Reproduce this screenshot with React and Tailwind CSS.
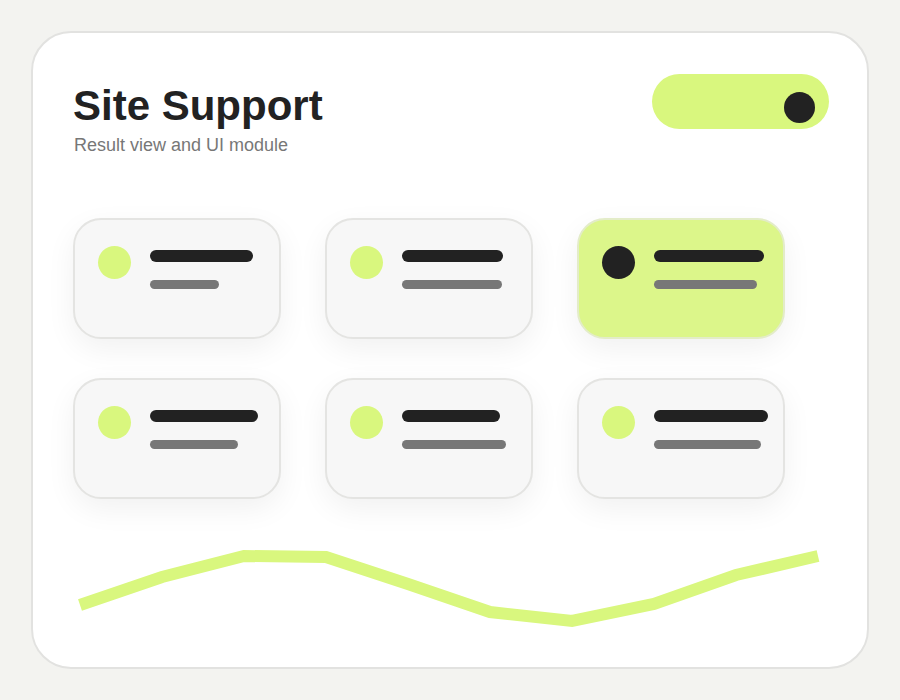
import React from 'react';

const tiles = [
  { a: 103, b: 69 },
  { a: 101, b: 100 },
  { a: 110, b: 103, active: true },
  { a: 108, b: 88 },
  { a: 98, b: 104 },
  { a: 114, b: 107 },
];

const points = [606, 578, 557, 558, 585, 613, 622, 605, 576, 557]
  .map((y, i) => `${7 + i * 82},${y - 539}`)
  .join(' ');

function Tile({ a, b, active }) {
  return (
    <div
      className={`h-[121px] rounded-[28px] border-2 pl-[23px] pt-[26px] flex items-start shadow-[0_10px_30px_rgba(0,0,0,0.06)] ${
        active ? 'bg-[#dcf68a] border-[#e3ecc8]' : 'bg-[#f7f7f7] border-[#e4e4e2]'
      }`}
    >
      <div className={`w-[33px] h-[33px] rounded-full shrink-0 ${active ? 'bg-[#222222]' : 'bg-[#d9f77e]'}`} />
      <div className="ml-[19px] pt-[4px] flex flex-col">
        <div className="h-[12px] rounded-full bg-[#222222]" style={{ width: a }} />
        <div className="mt-[18px] h-[9px] rounded-full bg-[#777777]" style={{ width: b }} />
      </div>
    </div>
  );
}

export default function App() {
  return (
    <div className="w-[900px] h-[700px] bg-[#f3f3f0] p-[31px] font-['Liberation_Sans',Arial,sans-serif]">
      <div className="w-[838px] h-[638px] bg-white border-2 border-[#e2e2e0] rounded-[40px] pl-[40px] pr-[38px] pt-[41px]">
        <div className="flex justify-between items-start">
          <div className="pt-[11px]">
            <h1 className="text-[42px] leading-none font-bold text-[#222222]">Site Support</h1>
            <p className="mt-[9px] text-[18px] leading-none text-[#777777] pl-[1px]">Result view and UI module</p>
          </div>
          <div className="w-[177px] h-[55px] rounded-full bg-[#d9f77e] flex items-start justify-end pr-[14px] pt-[18px]">
            <div className="w-[31px] h-[31px] rounded-full bg-[#222222]" />
          </div>
        </div>

        <div className="mt-[64px] grid grid-cols-[208px_208px_208px] gap-x-[44px] gap-y-[39px]">
          {tiles.map((t, i) => (
            <Tile key={i} {...t} />
          ))}
        </div>

        <svg className="mt-[39px] block" width="760" height="100" viewBox="0 0 760 100">
          <polyline points={points} fill="none" stroke="#d9f77e" strokeWidth="12" strokeLinejoin="miter" />
        </svg>
      </div>
    </div>
  );
}
